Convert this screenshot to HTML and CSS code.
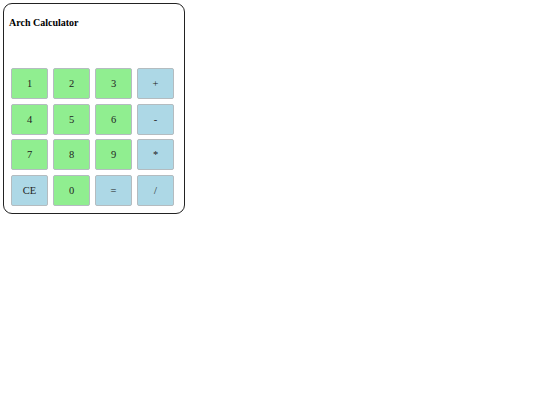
FILE: index.html
```html
<!DOCTYPE html>
<html lang="en">
<head>
    <meta charset="UTF-8">
    <meta name="viewport" content="width=device-width, initial-scale=1.0">
    <title>Arch Calculator</title>
    <link rel="stylesheet" href="styles.css">
</head>
<body>
    <div class="calculator">
        <h2>Arch Calculator</h2>
        <div class="display" id="display"></div>
        <div class="keys">
            <button class="num">1</button>
            <button class="num">2</button>
            <button class="num">3</button>
            <button class="op">+</button>
            <button class="num">4</button>
            <button class="num">5</button>
            <button class="num">6</button>
            <button class="op">-</button>
            <button class="num">7</button>
            <button class="num">8</button>
            <button class="num">9</button>
            <button class="op">*</button>
            <button class="op">CE</button>
            <button class="num">0</button>
            <button class="op">=</button>
            <button class="op">/</button>
        </div>
    </div>
</body>
</html>
```

FILE: styles.css
```css
body {
    font-family: 'Liberation Serif', 'Times New Roman', serif;
    margin: 0;
    padding: 3px;
    background: #fff;
}
.calculator {
    width: 170px;
    padding: 11px 5px 7px 5px;
    border: 1px solid #222;
    border-radius: 9px;
}
h2 {
    font-size: 10px;
    line-height: 15px;
    margin: 0;
    color: #000;
}
.display {
    height: 38px;
}
.keys {
    display: grid;
    grid-template-columns: repeat(4, 37px);
    grid-auto-rows: 31px;
    column-gap: 5px;
    row-gap: 4.5px;
    margin-left: 2px;
}
button {
    font-family: inherit;
    font-size: 10.5px;
    color: #222;
    border: 1px solid #b4bcc0;
    border-radius: 2px;
    padding: 0;
    cursor: pointer;
}
.num {
    background: #90ee90;
}
.op {
    background: #add8e6;
}
```
